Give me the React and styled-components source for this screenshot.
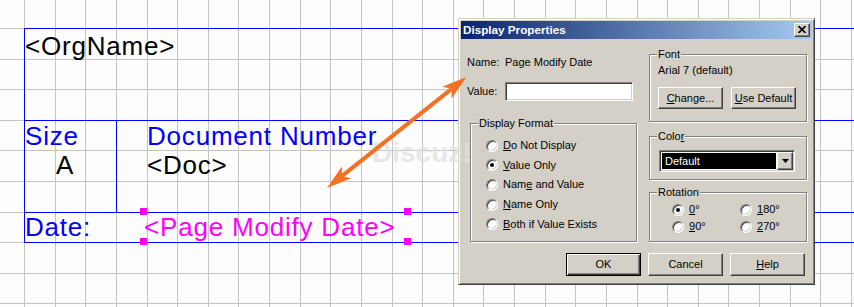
import React from 'react';
import styled, { createGlobalStyle, css } from 'styled-components';

const GlobalStyle = createGlobalStyle`
  *, *::before, *::after { box-sizing: border-box; }
  html, body { margin: 0; padding: 0; }
  body { width: 854px; height: 307px; overflow: hidden; background: #fcfdfc; }
`;

/* ---------- schematic canvas grid ---------- */
const gridXs = Array.from({ length: 28 }, (_, k) => Math.floor(24.6 + 30.62 * k));
const gridYs = [28, 59, 89, 120, 150, 181, 212, 242, 273, 303];
const gridStops = (arr) =>
  arr
    .map((p) => `transparent ${p}px, #c4c4c4 ${p}px, #c4c4c4 ${p + 1}px, transparent ${p + 1}px`)
    .join(', ');
const gridImage = `linear-gradient(to right, ${gridStops(gridXs)}), linear-gradient(to bottom, ${gridStops(gridYs)})`;

const Canvas = styled.div`
  position: relative;
  width: 854px;
  height: 307px;
  overflow: hidden;
  padding: 28px 0 0 24px;
  background-color: #fcfdfc;
  background-image: ${gridImage};
`;

const BLUE = '#0000ff';

const TitleBlock = styled.div`
  display: grid;
  grid-template-columns: 92px 1fr;
  grid-template-rows: 91px 92px 30px;
  width: 1000px;
  border-top: 1px solid ${BLUE};
  border-left: 1px solid ${BLUE};
  border-bottom: 1px solid ${BLUE};
  font-family: "Liberation Sans", Arial, sans-serif;
  font-size: 26px;
  letter-spacing: 0.8px;
  white-space: nowrap;
`;

const Cell = styled.div`
  grid-column: ${(p) => p.$span || 'auto'};
  border-top: ${(p) => (p.$top ? `1px solid ${BLUE}` : 'none')};
  border-right: ${(p) => (p.$right ? `1px solid ${BLUE}` : 'none')};
  padding: ${(p) => p.$pad || '0'};
  line-height: ${(p) => p.$lh || 29}px;
`;

const BlockLabel = styled.div`
  color: ${BLUE};
`;

const BlockValue = styled.div`
  color: #000;
  padding-left: ${(p) => p.$indent || 0}px;
`;

const SelectedField = styled.div`
  position: relative;
  width: 264px;
  height: 29px;
  padding: 1px 0 0 1px;
  color: #ff00ff;
  line-height: 26px;
`;

const Handle = styled.span`
  position: absolute;
  width: 7px;
  height: 7px;
  background: #ff00ff;
  left: ${(p) => (p.$right ? '261px' : '-3px')};
  top: ${(p) => (p.$bottom ? '25px' : '-5px')};
`;

/* ---------- dialog ---------- */
const Dialog = styled.div`
  position: absolute;
  left: 458px;
  top: 18px;
  width: 357px;
  height: 267px;
  display: flex;
  flex-direction: column;
  padding: 2px;
  background: #d4d0c8;
  border: 1px solid;
  border-color: #d4d0c8 #404040 #404040 #d4d0c8;
  box-shadow: inset 1px 1px 0 #fff, inset -1px -1px 0 #808080;
  font-family: "Liberation Sans", Arial, sans-serif;
  font-size: 11px;
  line-height: 13px;
  color: #000;
  white-space: nowrap;
`;

const TitleBar = styled.div`
  height: 18px;
  flex: none;
  display: flex;
  align-items: center;
  justify-content: space-between;
  padding: 0 2px;
  background: linear-gradient(to right, #0a246a, #a6caf0);
`;

const TitleText = styled.span`
  color: #fff;
  font-weight: bold;
  font-size: 11.7px;
  line-height: 18px;
`;

const bevelRaised = css`
  background: #d4d0c8;
  border: 1px solid;
  border-color: #fff #404040 #404040 #fff;
  box-shadow: inset -1px -1px 0 #808080;
`;

const CloseButton = styled.span`
  ${bevelRaised};
  width: 16px;
  height: 14px;
  display: flex;
  align-items: center;
  justify-content: center;
  padding-bottom: 1px;
`;

const DialogBody = styled.div`
  flex: 1;
  display: flex;
  flex-direction: column;
  padding: 9px 5px 0 6px;
`;

const Columns = styled.div`
  display: grid;
  grid-template-columns: 170px 158px;
  column-gap: 12px;
  height: 194px;
`;

const Column = styled.div`
  display: flex;
  flex-direction: column;
`;

const FieldRow = styled.div`
  display: flex;
  align-items: center;
  margin-top: ${(p) => p.$mt}px;
  height: ${(p) => p.$h || 13}px;
`;

const FieldLabel = styled.span`
  width: 38px;
  flex: none;
`;

const TextInput = styled.div`
  width: 128px;
  height: 19px;
  background: #fff;
  border: 1px solid;
  border-color: #808080 #fff #fff #808080;
  box-shadow: inset 1px 1px 0 #404040, inset -1px -1px 0 #d4d0c8;
`;

const GroupBox = styled.fieldset`
  margin: ${(p) => p.$margin || '0'};
  padding: 0;
  min-width: 0;
  flex: ${(p) => (p.$grow ? 1 : 'none')};
  height: ${(p) => (p.$h ? `${p.$h}px` : 'auto')};
  border: 1px solid #808080;
  box-shadow: inset 1px 1px 0 #fff, 1px 1px 0 #fff;
`;

const GroupLegend = styled.legend`
  margin-left: 7px;
  padding: 0 1px;
  line-height: 13px;
  background: #d4d0c8;
`;

const GroupContent = styled.div`
  padding: ${(p) => p.$pad};
`;

const RadioRow = styled.div`
  display: flex;
  align-items: center;
  gap: 5px;
  height: ${(p) => p.$h}px;
`;

const RadioMark = styled.span`
  position: relative;
  flex: none;
  width: 12px;
  height: 12px;
  border-radius: 50%;
  background: #fff;
  border: 1px solid;
  border-color: #808080 #fff #fff #808080;
  box-shadow: inset 1px 1px 0 #404040, inset -1px -1px 0 #d4d0c8;
  &::after {
    content: '';
    display: ${(p) => (p.$checked ? 'block' : 'none')};
    position: absolute;
    left: 3px;
    top: 3px;
    width: 4px;
    height: 4px;
    border-radius: 50%;
    background: #000;
  }
`;

const RadioGrid = styled.div`
  display: grid;
  grid-template-columns: 68px 68px;
`;

const ButtonRow = styled.div`
  display: flex;
  gap: ${(p) => p.$gap}px;
  justify-content: ${(p) => p.$justify || 'flex-start'};
  margin-top: ${(p) => p.$mt}px;
  padding-right: ${(p) => p.$pr || 0}px;
`;

const PushButton = styled.div`
  ${bevelRaised};
  width: ${(p) => p.$w}px;
  height: ${(p) => p.$h}px;
  display: flex;
  align-items: center;
  justify-content: center;
  ${(p) =>
    p.$default &&
    css`
      border-color: #000;
      box-shadow: inset 1px 1px 0 #fff, inset -1px -1px 0 #404040, inset -2px -2px 0 #808080;
    `}
`;

const ComboBox = styled.div`
  display: flex;
  width: 136px;
  height: 22px;
  padding: 1px;
  border: 1px solid;
  border-color: #808080 #fff #fff #808080;
  box-shadow: inset 1px 1px 0 #404040, inset -1px -1px 0 #d4d0c8;
  background: #fff;
`;

const ComboValue = styled.div`
  flex: 1;
  margin: 1px;
  padding-left: 3px;
  background: #000;
  color: #fff;
  line-height: 16px;
`;

const DropButton = styled.div`
  ${bevelRaised};
  width: 16px;
  height: 18px;
  display: flex;
  align-items: center;
  justify-content: center;
`;

const Underlined = styled.span`
  text-decoration: underline;
  text-underline-offset: 1px;
`;

/* ---------- overlays ---------- */
const Watermark = styled.div`
  position: absolute;
  left: 372px;
  top: 139px;
  font-family: "Liberation Sans", Arial, sans-serif;
  font-weight: bold;
  font-size: 28px;
  line-height: 28px;
  color: rgba(225, 225, 225, 0.8);
  pointer-events: none;
`;

const ArrowLayer = styled.svg`
  position: absolute;
  left: 0;
  top: 0;
  pointer-events: none;
`;

const ARROW_A = { x: 327, y: 188 };
const ARROW_B = { x: 466.5, y: 77 };
const adx = ARROW_B.x - ARROW_A.x;
const ady = ARROW_B.y - ARROW_A.y;
const alen = Math.hypot(adx, ady);
const ux = adx / alen;
const uy = ady / alen;
const nx = -uy;
const ny = ux;
const HEAD_L = 25;
const HEAD_W = 7.5;
const HEAD_N = 19;
function headPoints(tip, dir) {
  const bx = tip.x - dir * HEAD_L * ux;
  const by = tip.y - dir * HEAD_L * uy;
  const cx = tip.x - dir * HEAD_N * ux;
  const cy = tip.y - dir * HEAD_N * uy;
  return `${tip.x},${tip.y} ${bx + HEAD_W * nx},${by + HEAD_W * ny} ${cx},${cy} ${bx - HEAD_W * nx},${by - HEAD_W * ny}`;
}
const ORANGE = '#f37124';

function Radio({ checked, children, h }) {
  return (
    <RadioRow $h={h}>
      <RadioMark $checked={checked} />
      <span>{children}</span>
    </RadioRow>
  );
}

export default function App() {
  return (
    <>
      <GlobalStyle />
      <Canvas>
        <TitleBlock>
          <Cell $span="1 / -1" $pad="3px 0 0 0">
            <BlockValue>&lt;OrgName&gt;</BlockValue>
          </Cell>
          <Cell $top $right $pad="1px 0 0 0">
            <BlockLabel>Size</BlockLabel>
            <BlockValue $indent={31}>A</BlockValue>
          </Cell>
          <Cell $top $pad="1px 0 0 30px">
            <BlockLabel>Document Number</BlockLabel>
            <BlockValue>&lt;Doc&gt;</BlockValue>
          </Cell>
          <Cell $top $pad="1px 0 0 0" $lh={26}>
            <BlockLabel>Date:</BlockLabel>
          </Cell>
          <Cell $top $pad="0 0 0 26px" $lh={26}>
            <SelectedField>
              &lt;Page Modify Date&gt;
              <Handle />
              <Handle $right />
              <Handle $bottom />
              <Handle $right $bottom />
            </SelectedField>
          </Cell>
        </TitleBlock>

        <Dialog>
          <TitleBar>
            <TitleText>Display Properties</TitleText>
            <CloseButton>
              <svg width="8" height="7" viewBox="0 0 8 7">
                <path d="M0.5 0 L7.5 7 M7.5 0 L0.5 7" stroke="#000" strokeWidth="1.7" fill="none" />
              </svg>
            </CloseButton>
          </TitleBar>
          <DialogBody>
            <Columns>
              <Column>
                <FieldRow $mt={8}>
                  <FieldLabel>Name:</FieldLabel>
                  <span>Page Modify Date</span>
                </FieldRow>
                <FieldRow $mt={13} $h={19}>
                  <FieldLabel>Value:</FieldLabel>
                  <TextInput />
                </FieldRow>
                <GroupBox $grow $margin="16px 0 0 3px">
                  <GroupLegend>Display Format</GroupLegend>
                  <GroupContent $pad="6px 0 0 15px">
                    <Radio h={19.6}><Underlined>D</Underlined>o Not Display</Radio>
                    <Radio h={19.6} checked><Underlined>V</Underlined>alue Only</Radio>
                    <Radio h={19.6}>Nam<Underlined>e</Underlined> and Value</Radio>
                    <Radio h={19.6}><Underlined>N</Underlined>ame Only</Radio>
                    <Radio h={19.6}><Underlined>B</Underlined>oth if Value Exists</Radio>
                  </GroupContent>
                </GroupBox>
              </Column>
              <Column>
                <GroupBox $h={74}>
                  <GroupLegend>Font</GroupLegend>
                  <GroupContent $pad="3px 0 0 8px">
                    <div>Arial 7 (default)</div>
                    <ButtonRow $gap={8} $mt={10}>
                      <PushButton $w={65} $h={22}><Underlined>C</Underlined>hange...</PushButton>
                      <PushButton $w={65} $h={22}><Underlined>U</Underlined>se Default</PushButton>
                    </ButtonRow>
                  </GroupContent>
                </GroupBox>
                <GroupBox $h={50} $margin="8px 0 0 0">
                  <GroupLegend>Colo<Underlined>r</Underlined></GroupLegend>
                  <GroupContent $pad="7px 0 0 9px">
                    <ComboBox>
                      <ComboValue>Default</ComboValue>
                      <DropButton>
                        <svg width="7" height="4" viewBox="0 0 7 4">
                          <path d="M0 0 H7 L3.5 4 Z" fill="#000" />
                        </svg>
                      </DropButton>
                    </ComboBox>
                  </GroupContent>
                </GroupBox>
                <GroupBox $grow $margin="6px 0 0 0">
                  <GroupLegend>Rotation</GroupLegend>
                  <GroupContent $pad="2px 0 0 22px">
                    <RadioGrid>
                      <Radio h={17} checked><Underlined>0</Underlined>°</Radio>
                      <Radio h={17}><Underlined>1</Underlined>80°</Radio>
                      <Radio h={17}><Underlined>9</Underlined>0°</Radio>
                      <Radio h={17}><Underlined>2</Underlined>70°</Radio>
                    </RadioGrid>
                  </GroupContent>
                </GroupBox>
              </Column>
            </Columns>
            <ButtonRow $gap={7} $mt={11} $justify="flex-end" $pr={2}>
              <PushButton $w={75} $h={23} $default>OK</PushButton>
              <PushButton $w={75} $h={23}>Cancel</PushButton>
              <PushButton $w={75} $h={23}><Underlined>H</Underlined>elp</PushButton>
            </ButtonRow>
          </DialogBody>
        </Dialog>

        <Watermark>Discuz!</Watermark>

        <ArrowLayer width="854" height="307" viewBox="0 0 854 307">
          <line
            x1={ARROW_A.x + HEAD_N * ux}
            y1={ARROW_A.y + HEAD_N * uy}
            x2={ARROW_B.x - HEAD_N * ux}
            y2={ARROW_B.y - HEAD_N * uy}
            stroke={ORANGE}
            strokeWidth="4"
          />
          <polygon points={headPoints(ARROW_B, 1)} fill={ORANGE} />
          <polygon points={headPoints(ARROW_A, -1)} fill={ORANGE} />
        </ArrowLayer>
      </Canvas>
    </>
  );
}
